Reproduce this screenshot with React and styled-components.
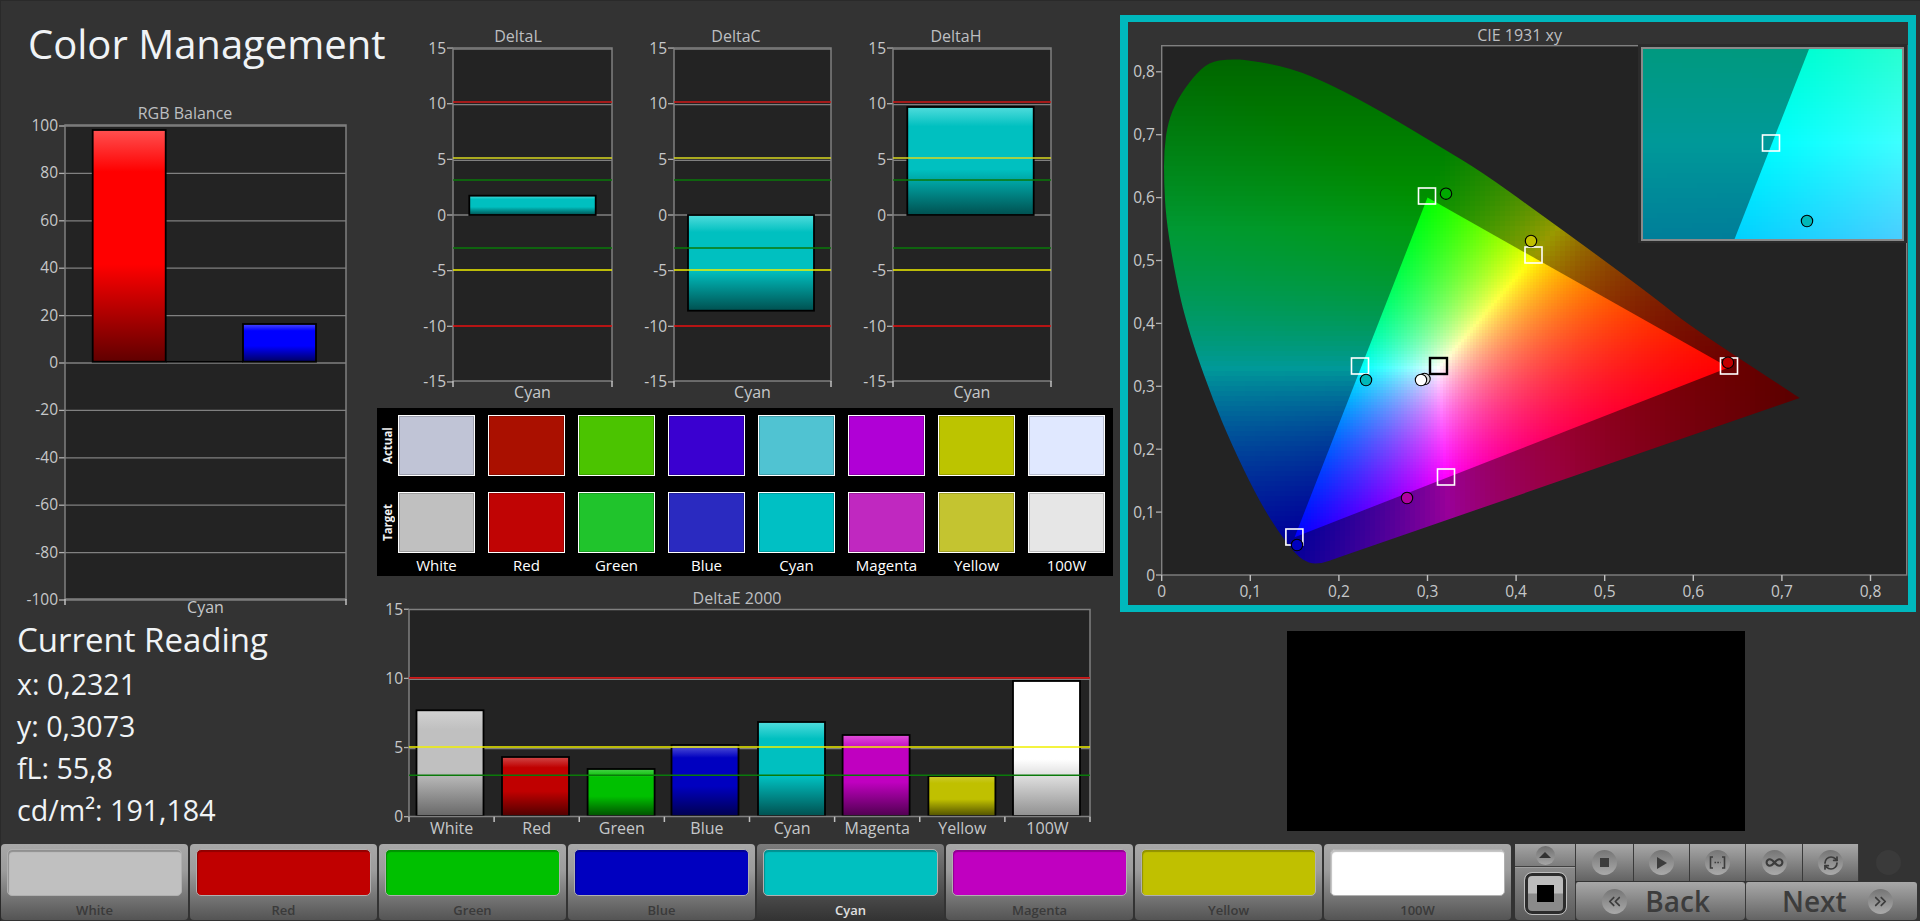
import React from 'react';
import styled, { createGlobalStyle } from 'styled-components';
import { ChevronsLeft, ChevronsRight, Infinity as InfinityIcon, RefreshCw } from 'lucide-react';

const GlobalStyle = createGlobalStyle`
  html, body {
    margin: 0;
    height: 100%;
    background: #333333;
    overflow: hidden;
  }
  body {
    font-family: "Open Sans", "Noto Sans", sans-serif;
  }
`;

const Page = styled.div`
  width: 1920px;
  height: 921px;
  background: #333333;
  box-shadow: inset 1px 1px 0 #2a2a2a;
  display: flex;
  flex-direction: column;
`;

const Main = styled.main`
  display: grid;
  grid-template-columns: 370px 750px 800px;
  height: 843px;
`;

const LeftColumn = styled.section`
  display: flex;
  flex-direction: column;
`;

const Title = styled.h1`
  margin: 0;
  padding: 21px 0 0 28px;
  font-size: 40px;
  font-weight: 400;
  line-height: 46px;
  color: #f0f3f6;
  white-space: nowrap;
`;

const ChartSvg = styled.svg`
  display: block;
  flex: none;
  margin-top: ${(p) => p.$top || 0}px;
  margin-left: ${(p) => p.$left || 0}px;
`;

const AxisText = styled.text`
  font-size: ${(p) => p.$size || 15.5}px;
  fill: #c6c8ca;
  font-family: "Open Sans", sans-serif;
`;

const ChartTitle = styled.text`
  font-size: 16px;
  fill: #bdbfc1;
  font-family: "Open Sans", sans-serif;
`;

const Reading = styled.div`
  padding-left: 17px;
  color: #f0f3f6;
`;

const ReadingHead = styled.div`
  font-size: 33px;
  line-height: 42px;
  margin: -1px 0 2px;
  white-space: nowrap;
`;

const ReadingRow = styled.div`
  font-size: 28.6px;
  line-height: 42px;
  white-space: nowrap;
`;

const MiddleColumn = styled.section`
  padding-top: 22px;
`;

const DeltaRow = styled.div`
  display: grid;
  grid-template-columns: 221px 219px 219px;
  padding-left: 35px;
  height: 382px;
`;

const SwatchPanel = styled.div`
  display: grid;
  grid-template-columns: 21px repeat(8, 90px);
  grid-template-rows: 61px 61px 1fr;
  row-gap: 16px;
  box-sizing: border-box;
  width: 736px;
  height: 168px;
  margin: 4px 0 0 7px;
  padding-top: 7px;
  background: #000000;
`;

const RowLabel = styled.div`
  writing-mode: vertical-rl;
  transform: rotate(180deg);
  justify-self: center;
  text-align: center;
  font-size: 11.5px;
  font-weight: 700;
  color: #f0f0f0;
`;

const Swatch = styled.div`
  box-sizing: border-box;
  width: 77px;
  height: 61px;
  background: ${(p) => p.$color};
  border: 1.5px solid #ffffff;
  box-shadow: inset 0 0 0 1px rgba(0, 0, 0, 0.18);
`;

const SwatchName = styled.div`
  width: 77px;
  margin-top: -14px;
  font-size: 15px;
  line-height: 20px;
  text-align: center;
  color: #ffffff;
`;

const RightColumn = styled.section`
  padding-top: 15px;
`;

const CieFrame = styled.div`
  box-sizing: border-box;
  width: 796px;
  height: 597px;
  border: solid #00b8bd;
  border-width: 7px 8px;
`;

const BlackPreview = styled.div`
  width: 458px;
  height: 200px;
  margin: 19px 0 0 167px;
  background: #000000;
`;

const Toolbar = styled.footer`
  display: flex;
  height: 76px;
  margin-top: 1px;
  padding-left: 1px;
`;

const ColorButton = styled.button`
  flex: none;
  box-sizing: border-box;
  width: 187px;
  height: 76px;
  margin: 0 2px 0 0;
  padding: 5px 6px 0;
  border: none;
  border-radius: 4px;
  display: flex;
  flex-direction: column;
  align-items: stretch;
  font-family: inherit;
  background: ${(p) =>
    p.$active
      ? 'linear-gradient(#7c7c7c, #333333)'
      : 'linear-gradient(#a8a8a8 0%, #9c9c9c 35%, #545454 100%)'};
`;

const ColorFill = styled.span`
  display: block;
  height: 47px;
  border-radius: 5px;
  background: ${(p) => p.$color};
  border: 1px solid #b0b0b0;
  box-sizing: border-box;
  box-shadow: inset 1px 2px 1px rgba(0, 0, 0, 0.25);
`;

const ColorLabel = styled.span`
  margin-top: 5px;
  font-size: 13px;
  font-weight: 600;
  line-height: 18px;
  text-align: center;
  color: ${(p) => (p.$active ? '#e0e0e0' : '#3a3a3a')};
`;

const RecordBox = styled.div`
  flex: none;
  width: 60px;
  height: 76px;
  margin-left: 2px;
  border-radius: 4px 0 0 4px;
  background: linear-gradient(#a0a0a0, #5a5a5a);
  display: flex;
  flex-direction: column;
`;

const RecordTop = styled.div`
  height: 22px;
  border-bottom: 1px solid #404040;
  box-shadow: 0 1px 0 #a0a0a0;
  display: flex;
  align-items: center;
  justify-content: center;
  background: linear-gradient(#a4a4a4, #7c7c7c);
`;

const SmallDisc = styled.span`
  width: 19px;
  height: 19px;
  border-radius: 50%;
  background: linear-gradient(#6e6e6e, #a6a6a6);
  display: flex;
  align-items: center;
  justify-content: center;
`;

const UpArrow = styled.span`
  width: 0;
  height: 0;
  border-left: 6px solid transparent;
  border-right: 6px solid transparent;
  border-bottom: 6px solid #333333;
`;

const RecordBody = styled.div`
  flex: 1;
  display: flex;
  align-items: center;
  justify-content: center;
`;

const RecordButton = styled.div`
  box-sizing: border-box;
  width: 41px;
  height: 41px;
  border-radius: 7px;
  border: 3px solid #2c2c2c;
  outline: 1px solid #bdbdbd;
  background: linear-gradient(#bcbcbc 0 48%, #8a8a8a 52% 100%);
  display: flex;
  align-items: center;
  justify-content: center;
`;

const RecordSquare = styled.span`
  width: 17px;
  height: 17px;
  background: #000000;
`;

const Transport = styled.div`
  flex: none;
  display: grid;
  grid-template-columns: 58px 56px 56px 57px 56px 59px;
  grid-template-rows: 37px 38px;
  row-gap: 1px;
  width: 342px;
`;

const TransportButton = styled.div`
  box-sizing: border-box;
  display: flex;
  align-items: center;
  justify-content: center;
  border-left: 1px solid #3a3a3a;
  background: ${(p) =>
    p.$dim ? '#333333' : 'linear-gradient(#a8a8a8, #636363)'};
`;

const IconDisc = styled.span`
  flex: none;
  width: 25px;
  height: 25px;
  border-radius: 50%;
  display: flex;
  align-items: center;
  justify-content: center;
  color: #3c3c3c;
  background: ${(p) =>
    p.$dim ? '#3a3a3a' : 'linear-gradient(#757575, #aaaaaa)'};
`;

const StopIcon = styled.span`
  width: 9px;
  height: 9px;
  background: #3c3c3c;
`;

const StepButton = styled.div`
  grid-column: span 3;
  box-sizing: border-box;
  display: flex;
  align-items: center;
  justify-content: space-between;
  padding: 0 ${(p) => p.$right}px 0 ${(p) => p.$left}px;
  border-left: 1px solid #3a3a3a;
  border-radius: 3px 3px 4px 4px;
  background: linear-gradient(#a8a8a8, #636363);
`;

const StepLabel = styled.span`
  font-size: 28px;
  font-weight: 600;
  line-height: 36px;
  color: #3c3c3c;
`;

// page coordinates of the charts, the viewBox of each svg is a piece of the page
const RGB_Y = (v) => 363 - v * 2.37;
const DELTA_Y = (v) => 215 - v * 11.13;
const DE_Y = (v) => 816.7 - v * 13.83;
const CIE_X = (v) => 1161.7 + 886 * v;
const CIE_Y = (v) => 575 - 629 * v;

const GRID = '#808080';
const PLOT = '#232323';

const gradients = {
  red: ['#ff5050', '#ff0000', '#600000'],
  blue: ['#4848ff', '#0000ff', '#000060'],
  cyan: ['#50dcdc', '#00c0c0', '#005050'],
  whiteBar: ['#d2d2d2', '#c0c0c0', '#686868'],
  redBar: ['#d04848', '#c00000', '#500000'],
  greenBar: ['#48d048', '#00c000', '#005000'],
  blueBar: ['#5858d8', '#0000c0', '#000050'],
  magentaBar: ['#e050d8', '#c000c0', '#500050'],
  yellowBar: ['#cccc30', '#c0c000', '#505000'],
  fullBar: ['#ffffff', '#ffffff', '#909090'],
};

const Gradients = ({ prefix }) => (
  <defs>
    {Object.entries(gradients).map(([name, [top, mid, bottom]]) => (
      <linearGradient key={name} id={`${prefix}-${name}`} x1="0" y1="0" x2="0" y2="1">
        <stop offset="0" stopColor={top} />
        <stop offset="0.18" stopColor={mid} />
        <stop offset="0.58" stopColor={mid} />
        <stop offset="1" stopColor={bottom} />
      </linearGradient>
    ))}
  </defs>
);

const Bar = ({ prefix, fill, x1, x2, y1, y2 }) => (
  <rect
    x={x1}
    y={Math.min(y1, y2)}
    width={x2 - x1}
    height={Math.abs(y2 - y1)}
    fill={`url(#${prefix}-${fill})`}
    stroke="#000"
    strokeWidth="1.8"
  />
);

const HLine = ({ x1, x2, y, color = GRID, width = 1.3 }) => (
  <line x1={x1} x2={x2} y1={y} y2={y} stroke={color} strokeWidth={width} />
);

const RgbChart = () => {
  const left = 65;
  const right = 346;
  const ticks = [100, 80, 60, 40, 20, 0, -20, -40, -60, -80, -100];
  return (
    <ChartSvg viewBox="0 100 370 520" width="370" height="520" $top={33}>
      <Gradients prefix="rgb" />
      <rect x={left} y="125" width={right - left} height="474" fill={PLOT} />
      {ticks.map((t) => (
        <g key={t}>
          <HLine x1={left} x2={right} y={RGB_Y(t)} />
          <HLine x1={left - 6} x2={left} y={RGB_Y(t)} color="#b0b0b0" />
          <AxisText x={left - 7} y={RGB_Y(t) + 5} textAnchor="end">{t}</AxisText>
        </g>
      ))}
      <rect x={left} y="125" width={right - left} height="474" fill="none" stroke={GRID} strokeWidth="1.5" />
      <line x1={left} x2={left} y1="599" y2="605" stroke="#c0c0c0" strokeWidth="1.5" />
      <line x1={right} x2={right} y1="599" y2="605" stroke="#c0c0c0" strokeWidth="1.5" />
      <HLine x1="166" x2="243" y="361.7" color="#000" width="1.5" />
      <Bar prefix="rgb" fill="red" x1={92.7} x2={165.7} y1={130} y2={361.7} />
      <Bar prefix="rgb" fill="blue" x1={243} x2={316} y1={324} y2={361.7} />
      <ChartTitle x="185" y="118.5" textAnchor="middle">RGB Balance</ChartTitle>
      <AxisText x="205.5" y="613" textAnchor="middle" $size={16}>Cyan</AxisText>
    </ChartSvg>
  );
};

const deltaCharts = [
  { name: 'DeltaL', svgX: 405, svgW: 221, left: 453, right: 612, titleX: 518, bar: [469.3, 595.7, 195.7, 215] },
  { name: 'DeltaC', svgX: 626, svgW: 219, left: 674, right: 831, titleX: 736, bar: [688, 814, 215, 310.7] },
  { name: 'DeltaH', svgX: 845, svgW: 219, left: 893, right: 1051, titleX: 956, bar: [907.3, 1033.7, 107, 215] },
];

const limits = [
  { y: 102, color: '#d01818' },
  { y: 158, color: '#d8d820' },
  { y: 180, color: '#0a7a0a' },
  { y: 248, color: '#0a7a0a' },
  { y: 270, color: '#f0f000' },
  { y: 326, color: '#e81010' },
];

const DeltaChart = ({ name, svgX, svgW, left, right, titleX, bar }) => {
  const ticks = [15, 10, 5, 0, -5, -10, -15];
  return (
    <ChartSvg viewBox={`${svgX} 22 ${svgW} 382`} width={svgW} height="382">
      <Gradients prefix={name} />
      <rect x={left} y="48" width={right - left} height="333" fill={PLOT} />
      {ticks.map((t) => (
        <g key={t}>
          {t >= 0 && <HLine x1={left} x2={right} y={DELTA_Y(t) + (t > 0 ? 1 : 0)} />}
          <HLine x1={left - 6} x2={left} y={DELTA_Y(t)} color="#b0b0b0" />
          <AxisText x={left - 7} y={DELTA_Y(t) + 5.5} textAnchor="end">{t}</AxisText>
        </g>
      ))}
      <rect x={left} y="48" width={right - left} height="333" fill="none" stroke={GRID} strokeWidth="1.5" />
      <line x1={left} x2={left} y1="381" y2="387" stroke="#c0c0c0" strokeWidth="1.5" />
      <line x1={right} x2={right} y1="381" y2="387" stroke="#c0c0c0" strokeWidth="1.5" />
      <Bar prefix={name} fill="cyan" x1={bar[0]} x2={bar[1]} y1={bar[2]} y2={bar[3]} />
      {limits.map((l) => (
        <HLine key={l.y} x1={left} x2={right} y={l.y} color={l.color} width="1.5" />
      ))}
      <ChartTitle x={titleX} y="42" textAnchor="middle">{name}</ChartTitle>
      <AxisText x={(left + right) / 2} y="398" textAnchor="middle" $size={16}>Cyan</AxisText>
    </ChartSvg>
  );
};

const deltaEBars = [
  { name: 'White', fill: 'whiteBar', x: 416.5, top: 710.3 },
  { name: 'Red', fill: 'redBar', x: 502, top: 757 },
  { name: 'Green', fill: 'greenBar', x: 587.6, top: 769 },
  { name: 'Blue', fill: 'blueBar', x: 671.5, top: 745 },
  { name: 'Cyan', fill: 'cyan', x: 758, top: 722 },
  { name: 'Magenta', fill: 'magentaBar', x: 842.6, top: 735 },
  { name: 'Yellow', fill: 'yellowBar', x: 928.4, top: 776 },
  { name: '100W', fill: 'fullBar', x: 1013, top: 681 },
];

const DeltaEChart = () => {
  const left = 409;
  const right = 1090;
  const step = (right - left) / 8;
  return (
    <ChartSvg viewBox="377 585 736 255" width="736" height="255" $top={9} $left={7}>
      <Gradients prefix="de" />
      <rect x={left} y="609.5" width={right - left} height="207" fill={PLOT} />
      <HLine x1={left} x2={right} y={DE_Y(10) + 1} />
      <HLine x1={left} x2={right} y={DE_Y(5) + 1} />
      {[15, 10, 5, 0].map((t) => (
        <g key={t}>
          <HLine x1={left - 5} x2={left} y={DE_Y(t)} color="#b0b0b0" />
          <AxisText x={left - 6} y={DE_Y(t) + 5.5} textAnchor="end">{t}</AxisText>
        </g>
      ))}
      {deltaEBars.map((b) => (
        <Bar key={b.name} prefix="de" fill={b.fill} x1={b.x} x2={b.x + 67} y1={b.top} y2={816} />
      ))}
      <rect x={left} y="609.5" width={right - left} height="207" fill="none" stroke={GRID} strokeWidth="1.5" />
      {Array.from({ length: 9 }, (_, i) => (
        <line key={i} x1={left + i * step} x2={left + i * step} y1="816.7" y2="822" stroke="#c0c0c0" strokeWidth="1.5" />
      ))}
      <HLine x1={left} x2={right} y={DE_Y(10) - 0.5} color="#d01818" width="1.6" />
      <HLine x1={left} x2={right} y={DE_Y(5) - 0.5} color="#f0f000" width="1.6" />
      <HLine x1={left} x2={right} y={DE_Y(3)} color="#0a7a0a" width="1.6" />
      {deltaEBars.map((b, i) => (
        <AxisText key={b.name} x={left + (i + 0.5) * step} y="833.5" textAnchor="middle" $size={16}>
          {b.name}
        </AxisText>
      ))}
      <ChartTitle x="737" y="604" textAnchor="middle">DeltaE 2000</ChartTitle>
    </ChartSvg>
  );
};

// xy chromaticity to rec709 colour, scaled so the largest channel is 1
const chromaColor = (x, y, gain) => {
  const X = x / y;
  const Z = (1 - x - y) / y;
  const r = Math.max(0, 3.2406 * X - 1.5372 - 0.4986 * Z);
  const g = Math.max(0, -0.9689 * X + 1.8758 + 0.0415 * Z);
  const b = Math.max(0, 0.0557 * X - 0.204 + 1.057 * Z);
  const m = Math.max(r, g, b) || 1;
  const c = (v) => Math.round((v / m) * 255 * gain);
  return `rgb(${c(r)},${c(g)},${c(b)})`;
};

// the part outside the rec709 triangle is shown dimmed
const outerGain = (x, y) => {
  let gain = 0.6;
  if (x > 0.45) gain -= ((x - 0.45) / 0.27) * 0.25;
  if (y > 0.55) gain -= ((y - 0.55) / 0.27) * 0.2;
  return gain;
};

const primaries = { r: [0.64, 0.33], g: [0.3, 0.6], b: [0.15, 0.06] };

const inTriangle = (px, py, toX, toY, margin) => {
  const pts = [primaries.r, primaries.g, primaries.b].map(([x, y]) => [toX(x), toY(y)]);
  const side = (a, b) => (b[0] - a[0]) * (py - a[1]) - (b[1] - a[1]) * (px - a[0]);
  const s1 = side(pts[0], pts[1]) / Math.hypot(pts[1][0] - pts[0][0], pts[1][1] - pts[0][1]);
  const s2 = side(pts[1], pts[2]) / Math.hypot(pts[2][0] - pts[1][0], pts[2][1] - pts[1][1]);
  const s3 = side(pts[2], pts[0]) / Math.hypot(pts[0][0] - pts[2][0], pts[0][1] - pts[2][1]);
  return (s1 > -margin && s2 > -margin && s3 > -margin) || (s1 < margin && s2 < margin && s3 < margin);
};

const buildCells = (box, step, toX, toY, fromPx, fromPy, inner) => {
  const cells = [];
  for (let py = box[1]; py < box[3]; py += step) {
    for (let px = box[0]; px < box[2]; px += step) {
      const cx = px + step / 2;
      const cy = py + step / 2;
      if (inner && !inTriangle(cx, cy, toX, toY, step * 1.5)) continue;
      const x = fromPx(cx);
      const y = Math.max(0.004, fromPy(cy));
      cells.push(
        <rect
          key={`${px}-${py}`}
          x={px}
          y={py}
          width={step + 0.4}
          height={step + 0.4}
          fill={chromaColor(x, y, inner ? 1 : outerGain(x, y))}
        />,
      );
    }
  }
  return cells;
};

const mainX = (px) => (px - 1161.7) / 886;
const mainY = (py) => (575 - py) / 629;
const insetToX = (v) => 1772 + (v - 0.2246) * 5070;
const insetToY = (v) => 143 - (v - 0.3287) * 3594;
const insetX = (px) => 0.2246 + (px - 1772) / 5070;
const insetY = (py) => 0.3287 + (143 - py) / 3594;

const mainOuter = buildCells([1160, 56, 1804, 568], 5, CIE_X, CIE_Y, mainX, mainY, false);
const mainInner = buildCells([1290, 192, 1735, 542], 3, CIE_X, CIE_Y, mainX, mainY, true);
const insetOuter = buildCells([1642, 48, 1904, 241], 5, insetToX, insetToY, insetX, insetY, false);
const insetInner = buildCells([1642, 48, 1904, 241], 3, insetToX, insetToY, insetX, insetY, true);

const locus = [
  [1337, 558], [1337, 558], [1322, 563.5], [1309, 563.5], [1296, 555], [1275, 527], [1255, 493], [1231, 443],
  [1213, 400], [1195, 350], [1186, 320], [1180, 297], [1172, 257], [1166, 217], [1164, 183], [1164, 150],
  [1168, 122], [1177, 100], [1193, 77], [1209, 62], [1229, 59], [1249, 60], [1291, 68], [1332, 85], [1384, 113],
  [1440.6, 147], [1482, 172], [1539, 213], [1601, 258], [1657.5, 300], [1688.5, 325], [1799.6, 398], [1799.6, 398],
];

const locusPath = () => {
  let d = `M${locus[0][0]} ${locus[0][1]}`;
  for (let i = 1; i < locus.length - 1; i += 1) {
    const [x, y] = locus[i];
    const [nx, ny] = locus[i + 1];
    d += ` Q${x} ${y} ${(x + nx) / 2} ${(y + ny) / 2}`;
  }
  return `${d} L${locus[locus.length - 1].join(' ')} Z`;
};

const trianglePoints = (toX, toY) =>
  [primaries.r, primaries.g, primaries.b].map(([x, y]) => `${toX(x)},${toY(y)}`).join(' ');

const targets = [
  { x: 1427, y: 196 },
  { x: 1533.5, y: 255 },
  { x: 1360, y: 366 },
  { x: 1729, y: 366 },
  { x: 1446, y: 477 },
  { x: 1294.4, y: 537 },
];

const actuals = [
  { x: 1424.5, y: 379, fill: '#dcdcdc' },
  { x: 1421, y: 380, fill: '#ffffff' },
  { x: 1446, y: 193.7, fill: '#00a800' },
  { x: 1531, y: 241, fill: '#c0c000' },
  { x: 1366, y: 380, fill: '#00b8b8' },
  { x: 1728, y: 362.7, fill: '#c00000' },
  { x: 1407, y: 498, fill: '#b000a0' },
  { x: 1297, y: 545, fill: '#0000c0' },
];

const TargetMark = ({ x, y, color = '#fff', width = 1.6 }) => (
  <rect x={x - 8.5} y={y - 8} width="17" height="16" fill="none" stroke={color} strokeWidth={width} />
);

const ActualDot = ({ x, y, fill }) => (
  <circle cx={x} cy={y} r="5.7" fill={fill} stroke="#000" strokeWidth="1.1" />
);

const CieChart = () => {
  const ticks = [0, 0.1, 0.2, 0.3, 0.4, 0.5, 0.6, 0.7, 0.8];
  const label = (t) => String(t).replace('.', ',');
  return (
    <ChartSvg viewBox="1128 22 780 583" width="780" height="583">
      <defs>
        <clipPath id="locus-clip">
          <path d={locusPath()} />
        </clipPath>
        <clipPath id="triangle-clip">
          <polygon points={trianglePoints(CIE_X, CIE_Y)} />
        </clipPath>
        <clipPath id="inset-triangle">
          <polygon points={trianglePoints(insetToX, insetToY)} />
        </clipPath>
        <clipPath id="inset-clip">
          <rect x="1642" y="48" width="261" height="192" />
        </clipPath>
      </defs>
      <rect x="1161.7" y="45.7" width="745" height="529.3" fill={PLOT} />
      <g shapeRendering="crispEdges">
        <g clipPath="url(#locus-clip)">{mainOuter}</g>
        <g clipPath="url(#triangle-clip)">{mainInner}</g>
      </g>
      <rect x="1161.7" y="45.7" width="745" height="529.3" fill="none" stroke={GRID} strokeWidth="1.4" />
      {ticks.map((t) => (
        <g key={t}>
          <HLine x1={1156} x2={1161.7} y={CIE_Y(t)} color="#b0b0b0" />
          <line x1={CIE_X(t)} x2={CIE_X(t)} y1="575" y2="581" stroke="#c0c0c0" strokeWidth="1.4" />
          <AxisText x="1155" y={CIE_Y(t) + 5.5} textAnchor="end">{label(t)}</AxisText>
          <AxisText x={CIE_X(t)} y="597" textAnchor="middle">{label(t)}</AxisText>
        </g>
      ))}
      {targets.map((t) => (
        <TargetMark key={t.x} x={t.x} y={t.y} />
      ))}
      <TargetMark x={1438.5} y={366} color="#000" width={2.4} />
      {actuals.map((a) => (
        <ActualDot key={a.x} x={a.x} y={a.y} fill={a.fill} />
      ))}

      <rect x="1638" y="44" width="269" height="199" fill="#2b2b2b" />
      <g clipPath="url(#inset-clip)" shapeRendering="crispEdges">
        {insetOuter}
        <g clipPath="url(#inset-triangle)">{insetInner}</g>
      </g>
      <rect x="1642" y="48" width="261" height="192" fill="none" stroke="#8a8a8a" strokeWidth="2" />
      <TargetMark x={1771} y={143} />
      <ActualDot x={1807} y={221} fill="#00b8b8" />

      <ChartTitle x="1519.6" y="40.5" textAnchor="middle">CIE 1931 xy</ChartTitle>
    </ChartSvg>
  );
};

const swatchNames = ['White', 'Red', 'Green', 'Blue', 'Cyan', 'Magenta', 'Yellow', '100W'];
const actualColors = ['#c0c4d6', '#aa1000', '#4bc400', '#3a00d0', '#50c3d2', '#b000d6', '#bcc400', '#e0e8ff'];
const targetColors = ['#c0c0c0', '#c00404', '#20c42c', '#2a2ac0', '#00c0c4', '#c028c0', '#c4c430', '#e6e6e6'];
const buttonColors = ['#c0c0c0', '#c00000', '#00c000', '#0000c0', '#00c0c0', '#c000c0', '#c0c000', '#ffffff'];

const BracketIcon = () => (
  <svg width="17" height="13" viewBox="0 0 17 13" fill="none" stroke="#3c3c3c" strokeWidth="1.6">
    <path d="M4 1H1.5V12H4M13 1H15.5V12H13" />
    <path d="M5.5 6.5H11.5" strokeDasharray="1.6 1.2" />
  </svg>
);

const PlayIcon = () => (
  <svg width="12" height="14" viewBox="0 0 12 14">
    <polygon points="1,1 11,7 1,13" fill="#3c3c3c" />
  </svg>
);

const App = () => (
  <Page>
    <GlobalStyle />
    <Main>
      <LeftColumn>
        <Title>Color Management</Title>
        <RgbChart />
        <Reading>
          <ReadingHead>Current Reading</ReadingHead>
          <ReadingRow>x: 0,2321</ReadingRow>
          <ReadingRow>y: 0,3073</ReadingRow>
          <ReadingRow>fL: 55,8</ReadingRow>
          <ReadingRow>cd/m²: 191,184</ReadingRow>
        </Reading>
      </LeftColumn>

      <MiddleColumn>
        <DeltaRow>
          {deltaCharts.map((c) => (
            <DeltaChart key={c.name} {...c} />
          ))}
        </DeltaRow>
        <SwatchPanel>
          <RowLabel>Actual</RowLabel>
          {actualColors.map((c) => (
            <Swatch key={c} $color={c} />
          ))}
          <RowLabel>Target</RowLabel>
          {targetColors.map((c) => (
            <Swatch key={c} $color={c} />
          ))}
          <span />
          {swatchNames.map((n) => (
            <SwatchName key={n}>{n}</SwatchName>
          ))}
        </SwatchPanel>
        <DeltaEChart />
      </MiddleColumn>

      <RightColumn>
        <CieFrame>
          <CieChart />
        </CieFrame>
        <BlackPreview />
      </RightColumn>
    </Main>

    <Toolbar>
      {swatchNames.map((n, i) => (
        <ColorButton key={n} $active={n === 'Cyan'}>
          <ColorFill $color={buttonColors[i]} />
          <ColorLabel $active={n === 'Cyan'}>{n}</ColorLabel>
        </ColorButton>
      ))}
      <RecordBox>
        <RecordTop>
          <SmallDisc>
            <UpArrow />
          </SmallDisc>
        </RecordTop>
        <RecordBody>
          <RecordButton>
            <RecordSquare />
          </RecordButton>
        </RecordBody>
      </RecordBox>
      <Transport>
        <TransportButton>
          <IconDisc><StopIcon /></IconDisc>
        </TransportButton>
        <TransportButton>
          <IconDisc><PlayIcon /></IconDisc>
        </TransportButton>
        <TransportButton>
          <IconDisc><BracketIcon /></IconDisc>
        </TransportButton>
        <TransportButton>
          <IconDisc><InfinityIcon size={19} strokeWidth={2.6} /></IconDisc>
        </TransportButton>
        <TransportButton>
          <IconDisc><RefreshCw size={16} strokeWidth={2.6} /></IconDisc>
        </TransportButton>
        <TransportButton $dim>
          <IconDisc $dim />
        </TransportButton>
        <StepButton $left={26} $right={35}>
          <IconDisc><ChevronsLeft size={19} strokeWidth={2.2} /></IconDisc>
          <StepLabel>Back</StepLabel>
        </StepButton>
        <StepButton $left={36} $right={24}>
          <StepLabel>Next</StepLabel>
          <IconDisc><ChevronsRight size={19} strokeWidth={2.2} /></IconDisc>
        </StepButton>
      </Transport>
    </Toolbar>
  </Page>
);

export default App;
